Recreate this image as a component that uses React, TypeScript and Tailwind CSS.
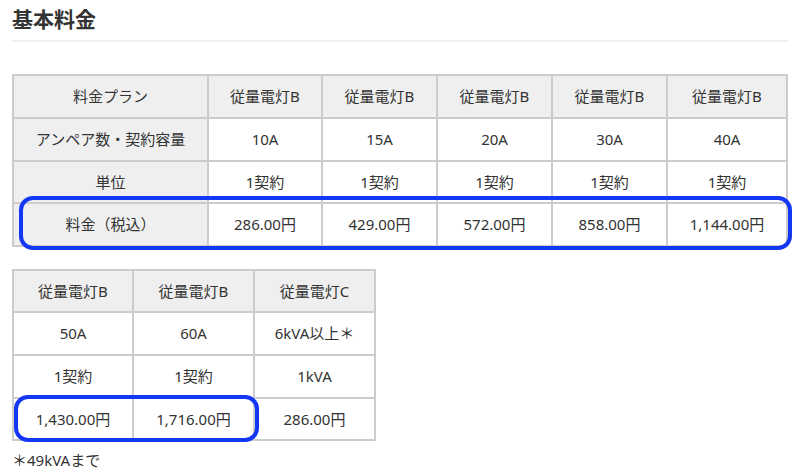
const FONT = "font-['Noto_Sans','Noto_Sans_CJK_JP',sans-serif]";

const plans1 = [
  { amp: '10A', price: '286.00円', w: 'w-[114px]' },
  { amp: '15A', price: '429.00円', w: 'w-[115px]' },
  { amp: '20A', price: '572.00円', w: 'w-[115px]' },
  { amp: '30A', price: '858.00円', w: 'w-[115px]' },
  { amp: '40A', price: '1,144.00円', w: 'w-[120px]' },
];

const plans2 = [
  { name: '従量電灯B', amp: '50A', unit: '1契約', price: '1,430.00円' },
  { name: '従量電灯B', amp: '60A', unit: '1契約', price: '1,716.00円' },
  { name: '従量電灯C', amp: '6kVA以上＊', unit: '1kVA', price: '286.00円' },
];

const cell = 'border-2 border-[#cccccc] text-center align-middle font-normal';
const head = `${cell} bg-[#efefef]`;

// hand-drawn marker ring laid over the table
function Marker({ className }: { className: string }) {
  return (
    <div className={`pointer-events-none absolute rounded-[14px] border-[4px] border-[#1436f5] ${className}`} />
  );
}

export default function App() {
  return (
    <div className={`relative h-[475px] w-[800px] overflow-hidden bg-white text-[15px] text-[#333333] ${FONT}`}>
      <div className="px-3 pt-[4px]">
        <h2 className="text-[21px] font-bold leading-[30px] text-[#333]">基本料金</h2>
        <div className="mt-[6px] h-[2px] bg-[#efefef]" />
      </div>

      <div className="ml-3 mt-8">
        <table className="w-[774px] table-fixed border-collapse">
          <tbody>
            <tr className="h-[43px]">
              <th className={`${head} w-[195px]`}>料金プラン</th>
              {plans1.map((p, i) => (
                <th key={i} className={`${head} ${p.w}`}>従量電灯B</th>
              ))}
            </tr>
            <tr className="h-[43px]">
              <th className={head}>アンペア数・契約容量</th>
              {plans1.map((p, i) => (
                <td key={i} className={cell}>{p.amp}</td>
              ))}
            </tr>
            <tr className="h-[42px]">
              <th className={head}>単位</th>
              {plans1.map((_, i) => (
                <td key={i} className={cell}>1契約</td>
              ))}
            </tr>
            <tr className="h-[43px]">
              <th className={head}>料金（税込）</th>
              {plans1.map((p, i) => (
                <td key={i} className={cell}>{p.price}</td>
              ))}
            </tr>
          </tbody>
        </table>

        <table className="mt-[22px] w-[363px] table-fixed border-collapse">
          <tbody>
            <tr className="h-[42px]">
              {plans2.map((p, i) => (
                <th key={i} className={`${head} ${i === 0 ? 'w-[120px]' : 'w-[121px]'}`}>{p.name}</th>
              ))}
            </tr>
            <tr className="h-[43px]">
              {plans2.map((p, i) => (
                <td key={i} className={cell}>{p.amp}</td>
              ))}
            </tr>
            <tr className="h-[43px]">
              {plans2.map((p, i) => (
                <td key={i} className={cell}>{p.unit}</td>
              ))}
            </tr>
            <tr className="h-[42px]">
              {plans2.map((p, i) => (
                <td key={i} className={cell}>{p.price}</td>
              ))}
            </tr>
          </tbody>
        </table>

        <p className="mt-[8px] leading-[22px]">＊49kVAまで</p>
      </div>

      <Marker className="left-[19px] top-[196px] h-[54px] w-[773px]" />
      <Marker className="left-[14px] top-[395px] h-[47px] w-[245px]" />
    </div>
  );
}
